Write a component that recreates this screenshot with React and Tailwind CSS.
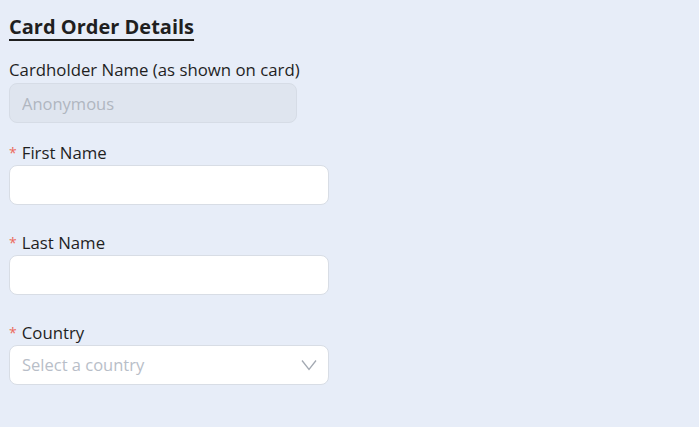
export default function App() {
  const field = 'h-10 w-[320px] rounded-lg border border-[#d8dde5] bg-white px-3 text-[16.5px] text-[#222] outline-none placeholder:text-[#b8bec8]';
  const label = 'flex h-6 items-center gap-[5px] text-[16.8px] leading-6';

  return (
    <div className="min-h-[427px] bg-[#e7edf8] px-[9px] pt-[13px] font-['Open_Sans',sans-serif] text-[#1f1f1f]">
      <h2 className="text-[20px] font-bold leading-7 underline decoration-2 underline-offset-[5px]">Card Order Details</h2>

      <div className="mt-[17px]">
        <label className="block h-6 text-[16.8px] leading-6">Cardholder Name (as shown on card)</label>
        <input
          disabled
          placeholder="Anonymous"
          className="mt-px h-10 w-[288px] rounded-lg border border-[#d6dce6] bg-[#dfe5ef] px-3 text-[16.5px] placeholder:text-[#b0b6c0]"
        />
      </div>

      <div className="mt-[18px]">
        <label className={label}>
          <span className="text-[14px] text-[#ec6a5c]">*</span>First Name
        </label>
        <input className={field} />
      </div>

      <div className="mt-[26px]">
        <label className={label}>
          <span className="text-[14px] text-[#ec6a5c]">*</span>Last Name
        </label>
        <input className={field} />
      </div>

      <div className="mt-[26px]">
        <label className={label}>
          <span className="text-[14px] text-[#ec6a5c]">*</span>Country
        </label>
        <div className="relative w-[320px]">
          <select defaultValue="" className={field + ' appearance-none text-[#b8bec8]'}>
            <option value="" disabled>Select a country</option>
          </select>
          <svg viewBox="0 0 16 12" className="pointer-events-none absolute right-[12px] top-[14px] h-[12px] w-[16px]" fill="none" stroke="#a3a9b2" strokeWidth="1.3">
            <path d="M1 1.5l7 9 7-9" />
          </svg>
        </div>
      </div>
    </div>
  );
}
